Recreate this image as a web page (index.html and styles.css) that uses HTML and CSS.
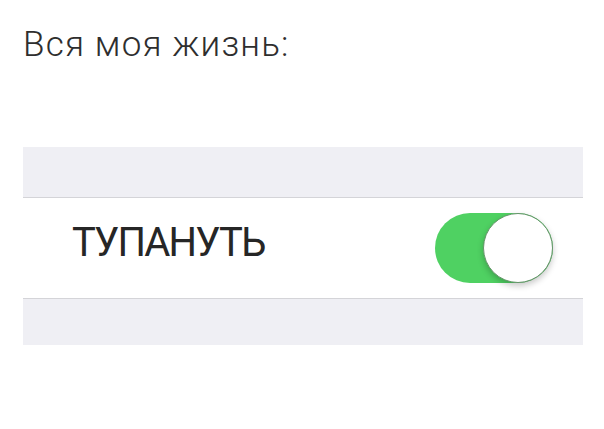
FILE: index.html
```html
<!DOCTYPE html>
<html lang="ru">
<head>
  <meta charset="UTF-8">
  <meta name="viewport" content="width=device-width, initial-scale=1.0">
  <title>Вся моя жизнь</title>
  <link rel="stylesheet" href="styles.css">
</head>
<body>
  <!-- Caption -->
  <h1 class="caption">Вся моя жизнь:</h1>

  <!-- Settings group -->
  <section class="settings">
    <div class="settings-gap"></div>
    <div class="settings-row">
      <span class="row-label">ТУПАНУТЬ</span>
      <div class="switch on">
        <div class="knob"></div>
      </div>
    </div>
    <div class="settings-gap bottom"></div>
  </section>
</body>
</html>
```

FILE: styles.css
```css
/* General Styles */
* {
  margin: 0;
  padding: 0;
  box-sizing: border-box;
}

body {
  width: 604px;
  height: 429px;
  background-color: #fff;
  font-family: Roboto, "Liberation Sans", sans-serif;
  color: #2b2b2b;
}

.caption {
  padding: 26px 0 0 23px;
  font-size: 35px;
  font-weight: 300;
  line-height: 38px;
  letter-spacing: 1.2px;
  color: #2e2e2e;
}

.settings {
  margin: 83px 21px 0 23px;
  background-color: #efeff4;
}

.settings-gap {
  height: 51px;
  border-bottom: 1px solid #d4d4d8;
}

.settings-gap.bottom {
  height: 47px;
  border-bottom: none;
  border-top: 1px solid #d4d4d8;
}

.settings-row {
  display: flex;
  align-items: center;
  justify-content: space-between;
  height: 100px;
  padding: 0 30px 0 49px;
  background-color: #fff;
}

.row-label {
  margin-bottom: 10px;
  font-size: 40px;
  line-height: 1;
  letter-spacing: -1.8px;
  color: #262626;
}

/* iOS style toggle */
.switch {
  display: flex;
  width: 118px;
  height: 70px;
  border-radius: 35px;
  background-color: #e5e5ea;
}

.switch.on {
  justify-content: flex-end;
  background-color: #4fd162;
}

.knob {
  width: 70px;
  height: 70px;
  border-radius: 50%;
  background-color: #fff;
  border: 1.5px solid #66946a;
  box-shadow: 0 3px 6px rgba(0, 0, 0, 0.22);
}
```
